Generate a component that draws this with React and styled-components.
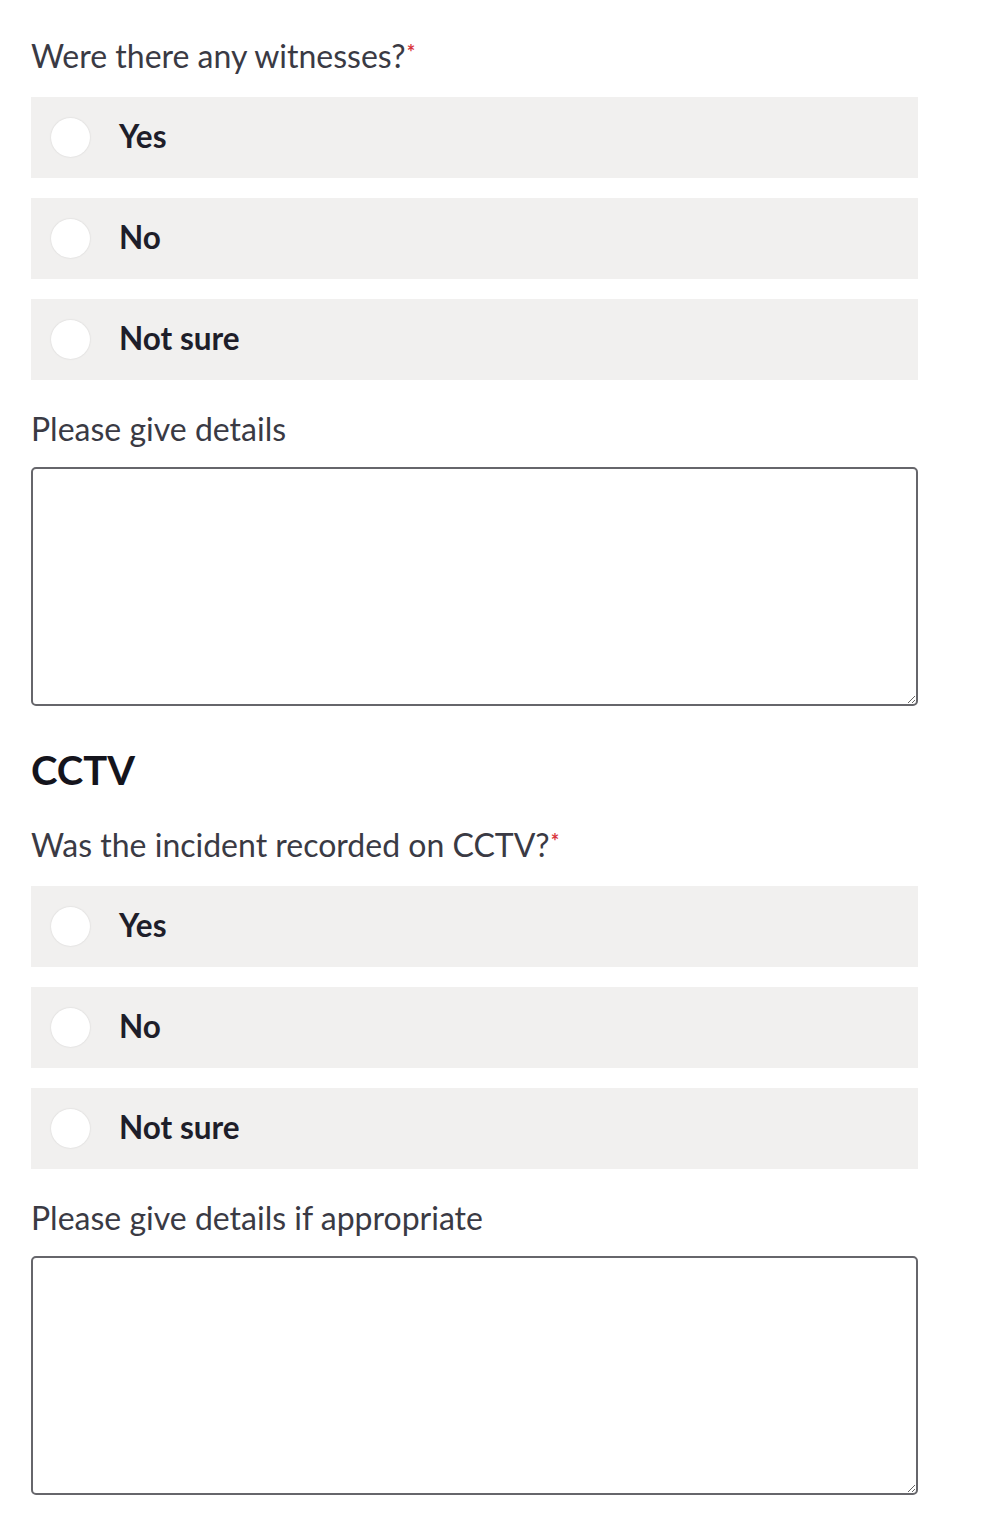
import React from 'react'
import styled, { createGlobalStyle } from 'styled-components'

const GlobalStyle = createGlobalStyle`
  body {
    margin: 0;
    background: #ffffff;
    font-family: Lato, "Open Sans", sans-serif;
    color: #2b2b33;
  }
`

const PageUI = styled('div')`
  width: 887px;
  padding: 36px 0 30px 31px;
  display: flex;
  flex-direction: column;
`

const QuestionUI = styled('div')`
  font-size: 32px;
  line-height: 40px;
  color: #3a3a44;
  margin-bottom: 21px;
`

const RequiredUI = styled('sup')`
  color: #d9363e;
  font-size: 20px;
  font-weight: 700;
  vertical-align: top;
  position: relative;
  top: -4px;
  margin-left: 1px;
`

const OptionListUI = styled('div')`
  display: flex;
  flex-direction: column;
  gap: 20px;
`

const OptionUI = styled('label')`
  display: flex;
  align-items: center;
  height: 81px;
  padding: 0 0 0 20px;
  background-color: #f1f0ef;
  font-size: 31.5px;
  font-weight: 700;
  color: #1e1e2a;
  cursor: pointer;
`

const OptionTextUI = styled('span')`
  margin-top: -3px;
`

const RadioUI = styled('span')`
  box-sizing: border-box;
  width: 39px;
  height: 39px;
  margin-right: 29px;
  border-radius: 50%;
  background-color: #ffffff;
  box-shadow: 0 0 2px rgba(0, 0, 0, 0.14);
`

const DetailsLabelUI = styled('div')`
  margin-top: 29px;
  margin-bottom: 18px;
  font-size: 32px;
  line-height: 40px;
  color: #3a3a44;
`

const TextAreaUI = styled('textarea')`
  box-sizing: border-box;
  display: block;
  width: 887px;
  height: 239px;
  margin: 0;
  border: 2px solid #66666b;
  border-radius: 5px;
  background: #ffffff;
  font-family: inherit;
  font-size: 20px;
`

const HeadingUI = styled('h2')`
  margin: 41px 0 32px;
  font-size: 40px;
  line-height: 46px;
  font-weight: 700;
  color: #14141c;
`

const Question = ({ text, details }) => (
  <>
    <QuestionUI>
      {text}
      <RequiredUI>*</RequiredUI>
    </QuestionUI>
    <OptionListUI>
      {['Yes', 'No', 'Not sure'].map(option => (
        <OptionUI key={option}>
          <RadioUI />
          <OptionTextUI>{option}</OptionTextUI>
        </OptionUI>
      ))}
    </OptionListUI>
    <DetailsLabelUI>{details}</DetailsLabelUI>
    <TextAreaUI />
  </>
)

export default function App() {
  return (
    <>
      <GlobalStyle />
      <PageUI>
        <Question text="Were there any witnesses?" details="Please give details" />
        <HeadingUI>CCTV</HeadingUI>
        <Question
          text="Was the incident recorded on CCTV?"
          details="Please give details if appropriate"
        />
      </PageUI>
    </>
  )
}
